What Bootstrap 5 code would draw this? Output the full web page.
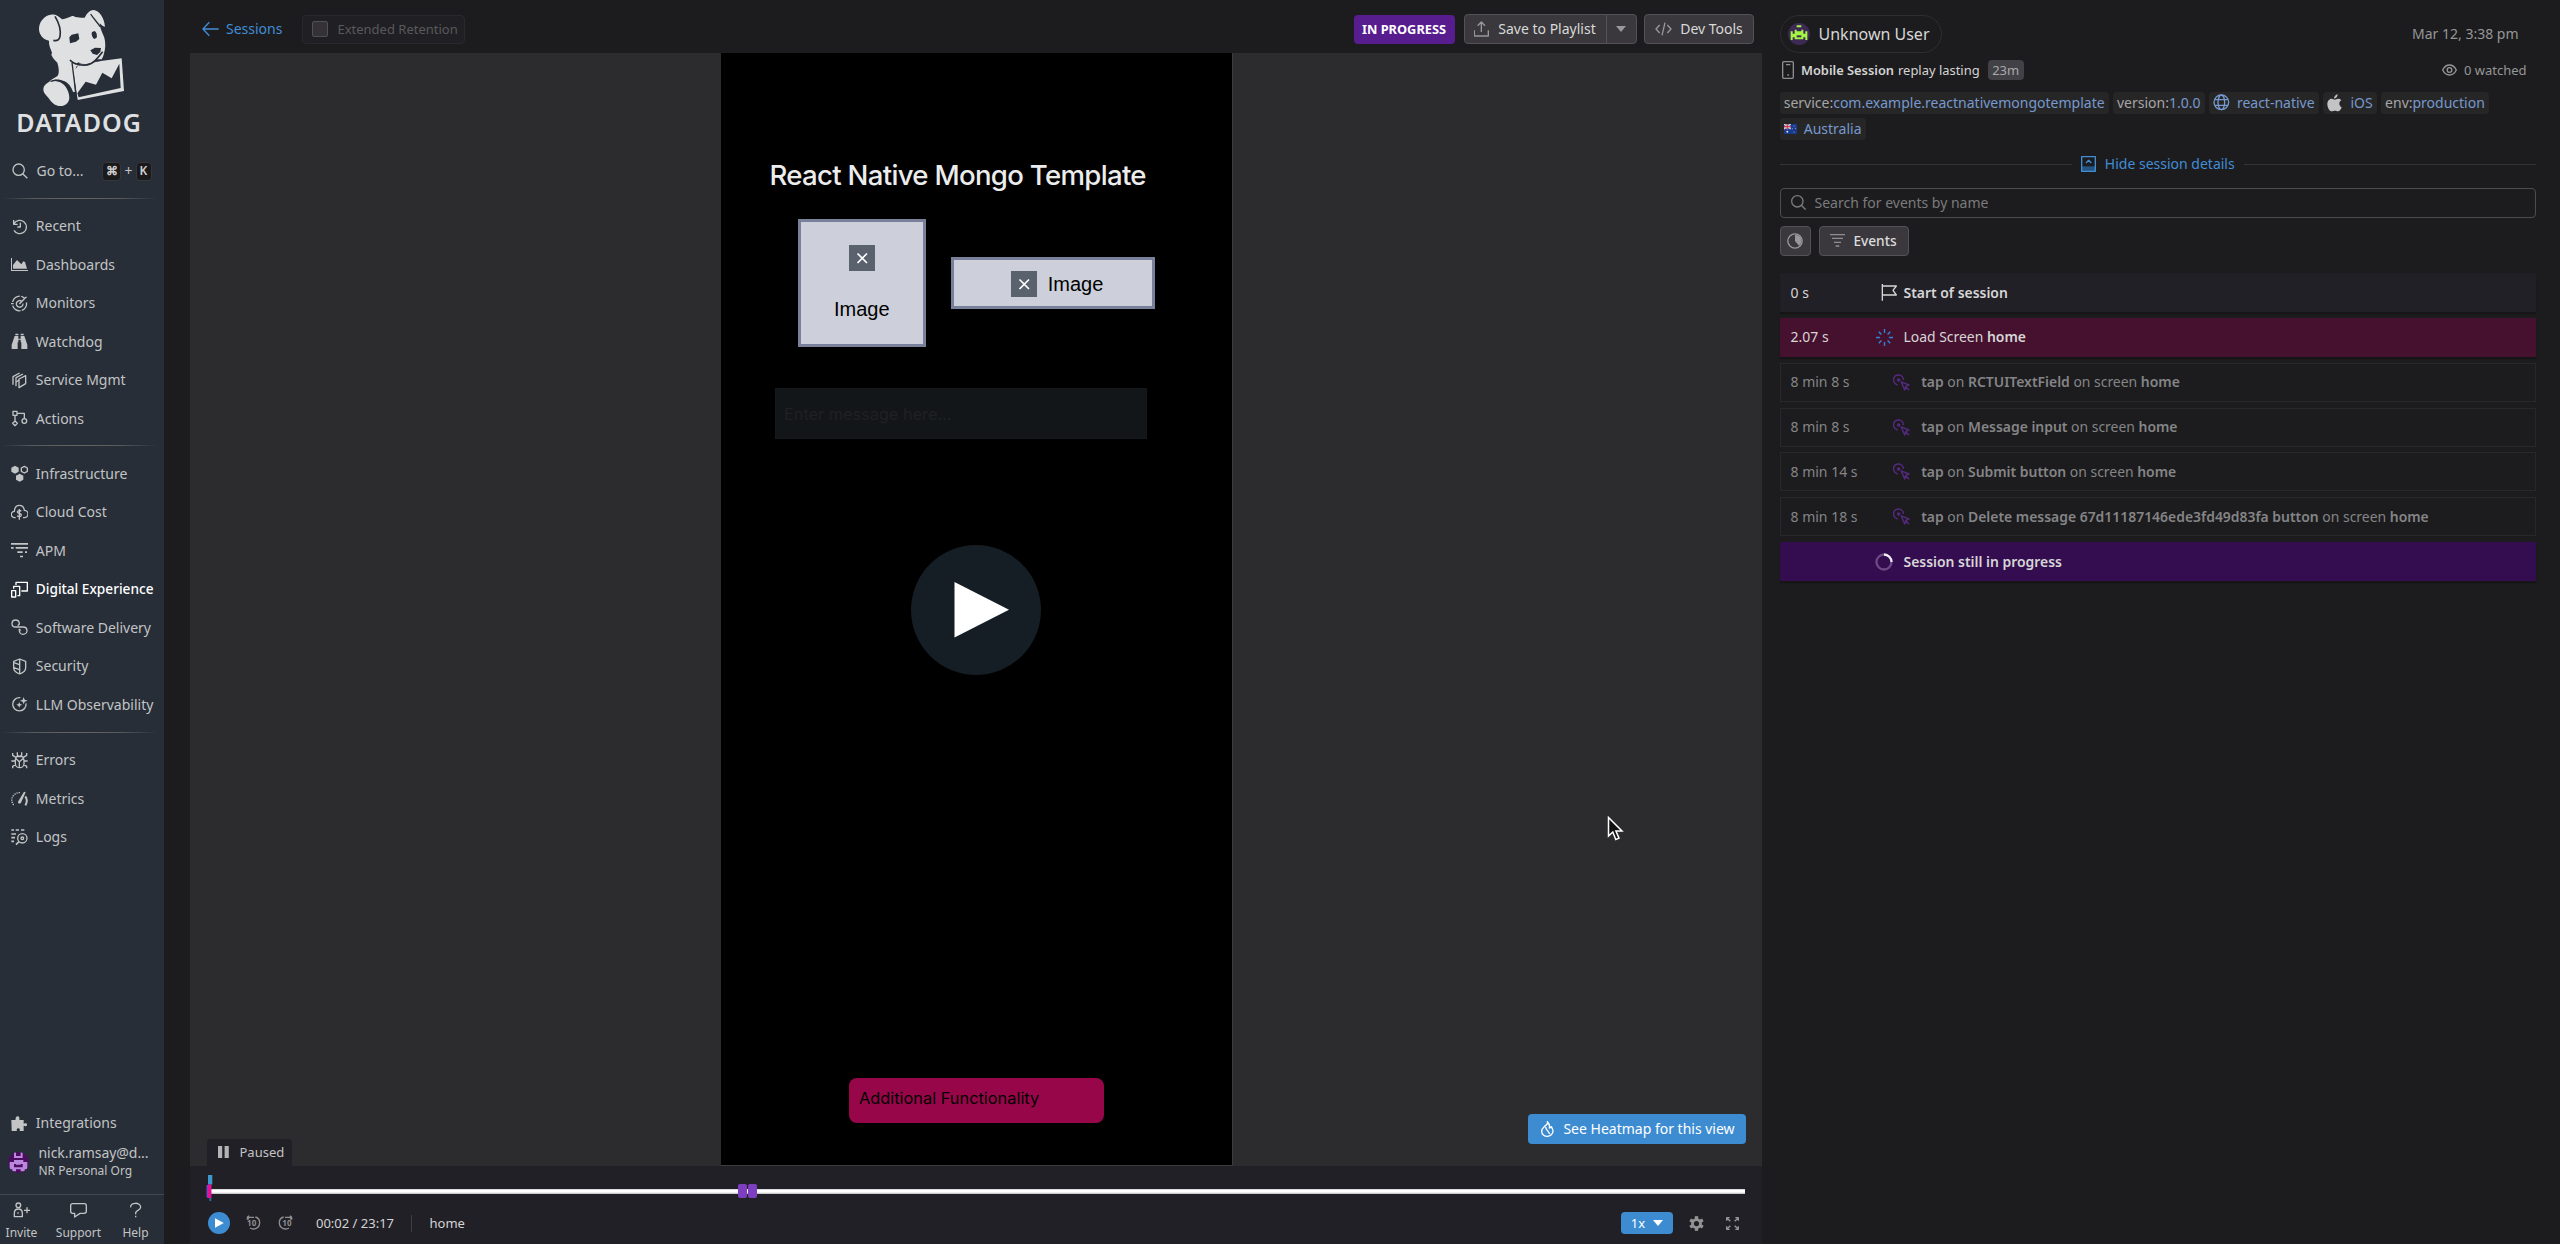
<!DOCTYPE html>
<html lang="en" data-bs-theme="dark">
<head>
<meta charset="utf-8">
<meta name="viewport" content="width=device-width, initial-scale=1">
<title>Session Replay | Datadog</title>
<link href="https://cdn.jsdelivr.net/npm/bootstrap@5.3.0/dist/css/bootstrap.min.css" rel="stylesheet">
<style>
body{background:#1c1c1e;font-family:"Noto Sans",sans-serif;font-size:14px;line-height:20px;color:#cdcdcd;height:1244px;overflow:hidden}
svg{display:block;flex:none}
.ln{fill:none;stroke:currentColor;stroke-width:4;stroke-linecap:butt;stroke-linejoin:round}
.fs12{font-size:12px}.fs13{font-size:13px}
b,.semi{font-weight:600}
.side{width:164px;background:#272e38;color:#c2c4c5;flex:none}
.side .nav-link{height:38.5px;padding:0 0 0 10.5px;display:flex;align-items:center;gap:8.3px;color:inherit;white-space:nowrap}
.side .nav-link.active{color:#fff;font-weight:500;font-size:13.65px}
.side .nav-link svg{width:17px;height:17px}
.rule{height:1px;margin:7.6px 6px 8.2px 2px;background:linear-gradient(90deg,transparent,#5a5b5e 20%,#66645f 50%,#5a5b5e 75%,transparent)}
.goto{height:38px;padding:0 12.5px 0 11.5px;gap:9px}
.key{background:#1a1a1d;border:1px solid #37373b;border-radius:4px;height:19px;line-height:16px;font-size:12px;text-align:center;color:#cfcfcf;font-weight:600}
.foot{height:50px;border-top:1px solid #43474f;font-size:12px}
.foot>div{line-height:14px}
.mainc{width:1572px;margin-left:26px;flex:none}
.topbar{height:53px;padding:5px 8px 0 12px}
.ext{height:29px;width:163px;border:1px solid #29282d;border-radius:4px;background:#201f23;color:#59595c;padding-left:9.5px;gap:9.5px;font-size:13px}
.cbx{width:15.5px;height:15.5px;border:1px solid #515055;border-radius:2px;background:#343237}
.blue{color:#418dd6}
.btn-dk{--bs-btn-bg:#3a383d;--bs-btn-border-color:#545257;--bs-btn-color:#d8d8d8;--bs-btn-font-size:14px;--bs-btn-line-height:20px;--bs-btn-padding-y:0;--bs-btn-padding-x:0;--bs-btn-border-radius:4px;display:flex;align-items:center;justify-content:center}
.progress-tag{height:29px;width:101px;border-radius:4px;background:#571c8e;color:#fff;font-weight:700;font-size:12.8px;line-height:28px;text-align:center}
.stage{height:1112.7px;background:#2c2c2e}
.device{width:511.5px;height:1112.7px;margin-left:531px;background:#000;border-right:1px solid #3c3c3e;border-bottom:1px solid #3c3c3e;font-family:Inter,sans-serif}
.title1{color:#ececec;font-size:27.6px;font-weight:500;letter-spacing:-.7px;line-height:36px;padding:103.5px 0 0 48.5px;white-space:nowrap}
.ph{background:#cdd0da;border:3.5px solid #78809a;color:#000;font:20px/24px "Liberation Sans",sans-serif}
.xb{width:26px;height:26px;background:#5a626d}
.msg{width:372px;height:51px;margin:40.5px 0 0 54px;background:#121618;border:1px solid #15191b;color:#202123;font-size:16.3px;line-height:50px;padding-left:8px}
.addf{width:255px;height:45px;margin:639px 0 0 128px;background:#98064a;border-radius:8px;color:#000;font-size:16.35px;line-height:41px;padding-left:10px}
.bigplay{left:721px;top:492px}
.paused{left:17px;bottom:0;width:85px;height:26.5px;background:#212026;border-radius:4px 4px 0 0;padding-left:11px;gap:10.5px;font-size:13px;color:#c4c4c5}
.heat{right:16.5px;bottom:22px;width:217.5px;height:30px;background:#3d8cd2;border-radius:4px;color:#fff;gap:9.5px;border:0;font-size:14px;padding:0 0 0 2px}
.pointer{left:1417px;top:763px}
.ctl{height:78.3px;background:#212026}
.track{height:5px;margin:23.3px 17px 0 18px;background:linear-gradient(#c9c9cd,#fff 30%,#fff 60%,#b9b9bd)}
.mk{border-radius:2px;background:#7d3fbf;width:9.2px;height:14px;top:-5px}
.ctlrow{height:22px;margin:18.5px 23px 0 18px}
.speed{width:52px;height:22px;background:#3d8cd2;border-radius:4px;color:#fff;gap:8px}
.panel{margin-left:17.5px;width:756.5px;flex:none}
.pill{width:162.5px;height:38.5px;border:1px solid #2e2e31;border-radius:20px;margin-top:14.5px;padding-left:7px;gap:9px;font-size:16px;color:#d6d6d6}
.dur{background:#424145;color:#a9a9ab;border-radius:4px;width:36px;height:20px;line-height:20px;text-align:center;font-size:13px}
.tagx{height:22px;background:#272627;border-radius:4px;padding:0 4.2px;line-height:20px;color:#a6a5a6;display:flex;align-items:center;white-space:pre}
.tagx span{color:#7699ce}
.dline{height:1px;background:#333335}
.find{height:30.5px;border:1px solid #4c4c4f;border-radius:4px;padding-left:10px;gap:9px;color:#7b7b7d}
.ev{height:39px;margin-bottom:5.85px;padding-left:10px;color:#858587;background:#1c1c1e;border:1px solid #28282a;display:flex;align-items:center;white-space:pre}
.ev.solid{border-color:transparent;box-shadow:0 2px 1px #151517;color:#d6d6d6}
.ev .t{width:77.5px}
.ev .ic{width:35.5px;display:flex;align-items:center}
.ev .ic.tapi{width:53.2px;padding-left:25px;color:#55297f}
.ev .tx{font-size:13.93px}
</style>
</head>
<body class="d-flex">

<aside class="side d-flex flex-column h-100">
  <svg width="164" height="140" viewBox="0 0 492 420">
    <g fill="#dfe0e2">
      <path d="M152 44c14-3 24 4 34 14 16-2 24-10 34-10l6 3c10 0 20 4 28 2 6-10 12-22 27-23 16 2 32 22 34 50-6 0-12-6-16-10 1 16 7 26 12 38 6 14 6 36 2 48-2 8-4 16-8 22h-12c-14 8-22 14-34 14-10 1-18-2-24-5l-12 8-2 22 4 58-6 1c-4-14-14-28-27-33-10-4-20-6-32-3l-16 10c10-14 26-18 30-24 4-8 3-22-2-38-8-8-14-14-18-24l2-6c-5-14-10-22-9-36-18-4-30-18-30-36 1-22 16-39 35-42z"/>
      <path d="M166 243c24 0 42 26 42 50 0 14-12 25-27 25-14 0-24-8-31-18-6-10-20-18-20-32 0-12 12-25 36-25z"/>
      <path d="M217 194l148-19 7 98-139 27z"/>
    </g>
    <g fill="#272e38">
      <path d="M236 292l-4-12 25-35 31 9 19-36 28 17 23-44 4 73z"/>
      <path d="M227 206c0-4 2-7 5-9l16-4c10 3 26 2 38-9l16-1-68 14z"/>
      <path d="M208 112l7-8 20-4 3 17-10 8-18 5z"/><path d="M276 96l8-3c6 4 8 14 6 20l-7 4c-6-4-10-14-7-21z"/>
      <path d="M271 151l14-8 18 1-2 12-10 9-13-4z"/>
    </g>
    <g fill="none" stroke="#272e38" stroke-width="5">
      <path d="M210 180c12 14 42 20 62 11 12-6 20-15 28-26l8-10"/><path d="M160 121c12 3 18-1 20-12 3-18-4-42-15-60"/><path d="M272 42c8 14 22 26 28 38" stroke-width="4"/><path d="M216 188l14 112" stroke-width="4"/><path d="M152 244c28-10 50 8 58 30" stroke-width="4"/>
    </g>
    <text x="49" y="395" font-family="Noto Sans,sans-serif" font-weight="600" font-size="75" textLength="374" fill="#dfe0e2">DATADOG</text>
  </svg>
  <div class="goto d-flex align-items-center" style="margin-top:12px">
    <svg width="16" height="16" viewBox="0 0 48 48" class="ln"><circle cx="20" cy="20" r="17"/><path d="M32 32l14 14"/></svg>
    <span>Go to...</span>
    <span class="key ms-auto" style="width:19px">⌘</span><span style="margin:0 -6px">+</span><span class="key" style="width:16px">K</span>
  </div>
  <div class="rule"></div>
  <nav class="nav flex-column flex-nowrap">
    <a class="nav-link"><svg viewBox="0 0 51 51" class="ln"><path d="M8 6v13h12M9 17a20 20 0 1 1 0 20"/><path d="M28 14v13h-9"/></svg>Recent</a>
    <a class="nav-link"><svg viewBox="0 0 51 51" fill="currentColor"><path d="M0 6h3v36h48v3H0z"/><path d="M6 38V27l12-15 13 13 6-9 5 2 6 20z"/></svg>Dashboards</a>
    <a class="nav-link"><svg viewBox="0 0 51 51" class="ln"><path d="M5 21A21 21 0 0 1 40 9M5 32a21 21 0 0 0 41-12" stroke-dasharray="30 4"/><path d="M0 26h8M31 18a10 10 0 1 0 5 8M25 27L43 8l4-2"/></svg>Monitors</a>
    <a class="nav-link"><svg viewBox="0 0 51 51" fill="currentColor"><path d="M13 2h9v5h-9zM29 2h9v5h-9zM11 9h11v8h7V9h11l9 26v13H31V28h-2v-8h-7v8h-2v20H2V35z"/></svg>Watchdog</a>
    <a class="nav-link"><svg viewBox="0 0 51 51" class="ln"><path d="M24 21l20-10v24L24 47zM15 43V17L36 6M6 38V14L26 3"/><path d="M16 30l8-6"/></svg>Service Mgmt</a>
    <a class="nav-link"><svg viewBox="0 0 51 51" class="ln"><path d="M6 4h12v12H6zM12 16v17M12 33l-7 7 7 7 7-7zM18 10h22v16"/><circle cx="40" cy="33" r="7"/></svg>Actions</a>
  </nav>
  <div class="rule"></div>
  <nav class="nav flex-column flex-nowrap">
    <a class="nav-link"><svg viewBox="0 0 51 51"><path fill="currentColor" d="M12 2l11 6v12l-11 6-11-6V8zM26 26l11 6v12l-11 6-11-6V32z"/><path class="ln" d="M40 4l9 5v10l-9 5-9-5V9z"/></svg>Infrastructure</a>
    <a class="nav-link"><svg viewBox="0 0 51 51" class="ln"><path d="M14 41h-3a9 9 0 0 1-1-19C11 10 17 4 25 4s14 6 15 15a11 11 0 0 1 0 22h-4"/><path d="M31 22c-4-4-12-3-12 2 0 6 12 3 12 9 0 6-8 6-13 2M25 15v32"/></svg>Cloud Cost</a>
    <a class="nav-link"><svg viewBox="0 0 51 51" fill="currentColor"><path d="M0 3h51v5H0zM0 15h8v5H0zM14 15h37v5H14zM19 28h16v5H19zM42 28h6v5h-6zM27 41h9v5h-9z"/></svg>APM</a>
    <a class="nav-link active"><svg viewBox="0 0 51 51" class="ln"><path d="M2 29h12v19H2zM8 23v-7h18v28h-7M15 12V4h34v26H31"/></svg>Digital Experience</a>
    <a class="nav-link"><svg viewBox="0 0 51 51" class="ln"><path d="M20 20C28 17 26 3 14 3 5 3 3 10 3 14c0 5 4 10 11 10h22c8 0 12 5 12 11 0 5-4 11-12 11-7 0-11-6-11-11h4M23 30l6 4"/></svg>Software Delivery</a>
    <a class="nav-link"><svg viewBox="0 0 51 51" class="ln"><path d="M26 3l18 7v19c0 8-8 15-18 19C16 44 8 37 8 29V10zM26 3v44M9 14l16 6M9 29l16 6"/></svg>Security</a>
    <a class="nav-link"><svg viewBox="0 0 51 51"><path class="ln" d="M28 5a20 20 0 1 0 17 17"/><path fill="currentColor" d="M38 3l3 8 9 3-9 3-3 8-3-8-8-3 8-3zM25 18l2 6 7 2-7 3-2 6-3-6-6-3 6-2z"/></svg>LLM Observability</a>
  </nav>
  <div class="rule"></div>
  <nav class="nav flex-column flex-nowrap">
    <a class="nav-link"><svg viewBox="0 0 51 51" class="ln"><path d="M16 14h19l4 10v11c0 7-6 12-13 12s-13-5-13-12V24zM25 30v17M15 20l10 9 11-9M19 1v9l6 4 7-4V1M5 3v7l11 7M47 3v7l-11 7M1 27h11M39 27h11M5 49v-6l10-6M47 49v-6l-10-6"/></svg>Errors</a>
    <a class="nav-link"><svg viewBox="0 0 51 51"><path class="ln" stroke-dasharray="4 3" d="M8 45C1 36 0 25 7 17s14-10 23-9"/><path class="ln" style="stroke-width:6" d="M43 19c6 9 6 18 0 27"/><path fill="currentColor" d="M39 5l5 2-14 31c-3 5-10 3-9-3z"/></svg>Metrics</a>
    <a class="nav-link"><svg viewBox="0 0 51 51" class="ln"><path d="M1 3h8M14 3h10M30 3h10M1 15h14M1 26h11M1 37h8M15 47l9-9" style="stroke-width:5"/><circle cx="34" cy="28" r="14"/><circle cx="34" cy="28" r="4"/></svg>Logs</a>
  </nav>
  <div class="mt-auto">
    <a class="nav-link"><svg viewBox="0 0 51 51" fill="currentColor"><path d="M1 15h13c-1-3 0-11 6-11s6 8 5 11h13v11c4 0 3-1 6-1 5 0 6 8 0 9-3 0-3-2-6-2v16H26c1-3 1-8-4-8s-6 5-4 8H2z"/></svg>Integrations</a>
    <div class="d-flex align-items-center" style="padding:0 0 15.5px 8px;gap:9.5px">
      <svg width="21" height="21" viewBox="0 0 63 63" class="mt-1"><defs><clipPath id="av1"><circle cx="31.5" cy="31.5" r="31.5"/></clipPath></defs><g clip-path="url(#av1)"><path fill="#4c0d5f" d="M0 0h63v63H0z"/><path fill="#b987dd" d="M18 0h6v12h14V0h6v18H18zM18 24h28v6h12v22h-8v6H38v-6H24v6H13v-6H5V30h13z"/><path fill="#4c0d5f" d="M18 36h26v10H18z"/><path fill="#b987dd" d="M24 30h14v8H24z"/></g></svg>
      <div><div style="line-height:19px;letter-spacing:-.05px">nick.ramsay@d...</div><div class="fs12" style="line-height:17px">NR Personal Org</div></div>
    </div>
    <div class="foot d-flex text-center">
      <div style="width:43px;padding-top:7px"><svg width="17" height="17" viewBox="0 0 51 51" class="ln mx-auto"><circle cx="16" cy="10" r="7"/><path d="M16 21c-8 0-12 5-12 13v10h24V34c0-8-4-13-12-13zM15 31v4M42 16v18M33 25h18"/></svg><div style="margin-top:7px">Invite</div></div>
      <div style="width:71px;padding-top:7px"><svg width="17" height="17" viewBox="0 0 51 51" class="ln mx-auto"><path d="M8 5h35c4 0 6 2 6 6v17c0 4-3 6-7 6H30L14 45V34H8c-4 0-6-2-6-6V11c0-4 2-6 6-6z"/></svg><div style="margin-top:7px">Support</div></div>
      <div style="width:43px;padding-top:7px"><svg width="17" height="17" viewBox="0 0 51 51" class="ln mx-auto"><path d="M11 16C9 0 41 0 41 15c0 10-15 10-15 18v4M26 41v5"/></svg><div style="margin-top:7px">Help</div></div>
    </div>
  </div>
</aside>

<main class="mainc">
  <header class="topbar d-flex align-items-center">
    <svg width="17" height="16" viewBox="0 0 51 48" class="ln blue"><path d="M50 24H4M22 4L3 24l19 20"/></svg>
    <a class="blue text-decoration-none" style="margin-left:7px">Sessions</a>
    <div class="ext d-flex align-items-center" style="margin-left:19.5px"><span class="cbx"></span>Extended Retention</div>
    <span class="progress-tag ms-auto">IN PROGRESS</span>
    <div class="btn-group" style="margin-left:9px">
      <button class="btn btn-dk" style="width:143px;height:29.5px;gap:9px"><svg width="15" height="16" viewBox="0 0 45 48" class="ln" color="#98979a"><path d="M1 28v17h42V28M22 33V3M11 14L22 3l11 11"/></svg>Save to Playlist</button>
      <button class="btn btn-dk" style="width:31px;height:29.5px"><svg width="10" height="6" viewBox="0 0 10 6"><path fill="#98979a" d="M0 0h10L5 6z"/></svg></button>
    </div>
    <button class="btn btn-dk" style="width:110px;height:29.5px;gap:8px;margin-left:7.5px"><svg width="17" height="14" viewBox="0 0 51 42" class="ln" color="#98979a"><path d="M14 9L3 21l11 12M37 9l11 12-11 12M30 2l-9 38"/></svg>Dev Tools</button>
  </header>

  <section class="stage position-relative">
    <div class="device">
      <div class="title1">React Native Mongo Template</div>
      <div class="d-flex align-items-center" style="margin:26.5px 0 0 76.5px;gap:25px">
        <div class="ph d-flex flex-column align-items-center" style="width:128.5px;height:128px;padding-top:23px"><div class="xb"><svg width="26" height="26" viewBox="0 0 26 26"><path d="M8.5 8.5l9.5 9.5M18 8.5l-9.5 9.5" stroke="#fff" stroke-width="1.7"/></svg></div><div style="margin-top:25.5px">Image</div></div>
        <div class="ph d-flex align-items-center justify-content-center" style="width:204px;height:52px;gap:11px;padding:1px 0 0 8px"><div class="xb"><svg width="26" height="26" viewBox="0 0 26 26"><path d="M8.5 8.5l9.5 9.5M18 8.5l-9.5 9.5" stroke="#fff" stroke-width="1.7"/></svg></div>Image</div>
      </div>
      <div class="msg">Enter message here...</div>
      <div class="addf">Additional Functionality</div>
    </div>
    <svg class="bigplay position-absolute" width="130" height="130" viewBox="0 0 130 130"><circle cx="65" cy="65" r="65" fill="#151e24"/><path fill="#fff" d="M43.500 37l54.500 27.700-54.500 27.700z"/></svg>
    <svg class="pointer position-absolute" width="17" height="25" viewBox="0 0 17 25"><path d="M1.500 1.500v18.500l4.300-4 3 7.500 3.200-1.300-3.100-7.200h6.100z" fill="#111" stroke="#fff" stroke-width="1.500"/></svg>
    <div class="paused position-absolute d-flex align-items-center"><svg width="11" height="12" viewBox="0 0 11 12"><path fill="#b4b4b6" d="M0 0h4.200v12H0zM6.600 0h4.200v12H6.600z"/></svg>Paused</div>
    <button class="heat btn position-absolute d-flex align-items-center justify-content-center"><svg width="13" height="16" viewBox="0 0 39 48" class="ln"><path d="M19 2c4 7-4 10-10 16C3 23 2 27 2 31c0 9 8 15 17 15s17-7 17-15c0-7-3-10-5-14-3 4-4 4-6 4 2-7 0-13-6-19zM15 18c-3 8 8 11 11 21"/></svg>See Heatmap for this view</button>
  </section>

  <footer class="ctl d-flex flex-column">
    <div class="track position-relative">
      <span class="mk position-absolute" style="left:530px"></span><span class="mk position-absolute" style="left:539.7px"></span>
      <svg class="position-absolute" style="left:-2px;top:-14px" width="7" height="27" viewBox="0 0 7 27"><path fill="#3d98cc" d="M2 0h4.300v9.500H2z"/><path fill="#2d6b92" d="M3.300 9h2v17h-2z"/><path fill="#7d3fbf" d="M.5 10.500L2.300 9.500v14L.500 22z"/><path fill="#ee0c96" d="M2 9.500h3.300v13.500H2z"/></svg>
    </div>
    <div class="ctlrow d-flex align-items-center">
      <svg width="22" height="22" viewBox="0 0 22 22"><circle cx="11" cy="11" r="11" fill="#3d8cd2"/><path fill="#fff" d="M7 6.300l8.800 4.700L7 15.700z"/></svg>
      <svg width="15" height="16" viewBox="0 0 45 48" style="margin-left:15.5px" color="#8f8f92"><g class="ln"><path d="M28 6c8 2 13 8 13 17 0 11-8 19-19 19-4 0-7-1-10-3M4 7h20M9 2L4 7l5 6M4 9v5"/></g><text x="3" y="32" font-size="24" font-weight="700" font-family="Noto Sans" textLength="28" fill="currentColor">10</text></svg>
      <svg width="15" height="16" viewBox="0 0 45 48" style="margin-left:17.5px" color="#8f8f92"><g class="ln"><path d="M17 6C9 8 4 14 4 23c0 11 8 19 19 19 4 0 7-1 10-3M41 7H21M36 2l5 5-5 6M41 9v5"/></g><text x="13" y="32" font-size="24" font-weight="700" font-family="Noto Sans" textLength="28" fill="currentColor">10</text></svg>
      <span class="fs13" style="margin-left:23px;width:94.5px;color:#d4d4d6">00:02 / 23:17</span>
      <span style="width:1.5px;height:17px;background:#3f3f44"></span>
      <span class="fs13" style="margin-left:17.5px;color:#d4d4d6">home</span>
      <span class="speed fs13 d-flex align-items-center justify-content-center ms-auto">1x<svg width="10" height="6" viewBox="0 0 10 6"><path fill="#fff" d="M0 0h10L5 6z"/></svg></span>
      <svg width="15" height="15" viewBox="-8 -8 16 16" style="margin-left:15.5px"><g fill="#949496"><circle r="5.700"/><path d="M-1.800-7.800h3.600v15.600h-3.600z"/><path d="M-1.800-7.800h3.600v15.600h-3.600z" transform="rotate(60)"/><path d="M-1.800-7.800h3.600v15.600h-3.600z" transform="rotate(120)"/></g><circle r="2.800" fill="#212026"/></svg>
      <svg width="13" height="13" viewBox="0 0 39 39" class="ln" style="margin-left:22.5px" color="#949496"><path d="M2 11V2h9M2 2l11 11M28 2h9v9M37 2L26 13M2 28v9h9M2 37l11-11M37 28v9h-9M37 37L26 26"/></svg>
    </div>
  </footer>
</main>

<section class="panel">
  <div class="d-flex justify-content-between">
    <div class="pill d-flex align-items-center"><svg width="22" height="22" viewBox="0 0 66 66"><circle cx="33" cy="33" r="33" fill="#3c2a54"/><path fill="#a6f545" d="M26 7h14v6H26zM20 20h6v5h14v-5h6v12h6v-7h6v26h-6v-8h-6v6H20v-6h-6v8H8V25h6v7h6z"/><path fill="#3c2a54" d="M26 37h14v6H26z"/></svg>Unknown User</div>
    <span style="margin:24px 17.5px 0 0;color:#969698">Mar 12, 3:38 pm</span>
  </div>
  <div class="d-flex align-items-center fs13" style="height:20px;margin-top:7px;padding:0 9.5px 0 2.5px;color:#d4d4d4">
    <svg width="12" height="18" viewBox="0 0 36 54" class="ln" color="#8e8e90"><rect x="2" y="2" width="32" height="50" rx="3"/><path d="M12 11h13M16 42h5"/></svg>
    <b style="margin-left:7px;font-size:12.85px">Mobile Session</b><span style="margin-left:4px;font-size:12.95px">replay lasting</span><span class="dur" style="margin-left:8px">23m</span>
    <span class="ms-auto d-flex align-items-center" style="gap:6.5px;color:#969698"><svg width="15" height="12" viewBox="0 0 45 36" class="ln"><path d="M2 18C12-2 33-2 43 18 33 38 12 38 2 18z"/><circle cx="22.5" cy="18" r="7"/></svg>0 watched</span>
  </div>
  <div class="d-flex flex-wrap" style="margin-top:11.5px;gap:4px;row-gap:4.5px">
    <div class="tagx">service:<span>com.example.reactnativemongotemplate</span></div>
    <div class="tagx">version:<span>1.0.0</span></div>
    <div class="tagx" style="gap:7px"><svg width="17" height="17" viewBox="0 0 51 51" class="ln" color="#7699ce"><circle cx="25" cy="25" r="22"/><ellipse cx="25" cy="25" rx="10" ry="22"/><path d="M5 17h40M5 34h40"/></svg><span>react-native</span></div>
    <div class="tagx" style="gap:8.5px"><svg width="15" height="18" viewBox="0 0 45 54"><path fill="#c3c3c5" d="M32 1c0 7-4 12-11 13 0-7 5-12 11-13zM23 17c3 0 6-3 11-3 4 0 7 2 9 5-9 5-7 17 1 21-2 6-6 12-11 12-4 0-5-2-9-2s-6 2-9 2C7 52 1 40 1 30c0-9 6-16 13-16 4 0 6 3 9 3z"/></svg><span>iOS</span></div>
    <div class="tagx">env:<span>production</span></div>
    <div class="tagx" style="gap:7px"><svg width="13" height="10" viewBox="0 0 39 30"><path fill="#173a8c" d="M0 0h39v30H0z"/><path stroke="#ddd" stroke-width="4" d="M0 0l20 15M20 0L0 15"/><path stroke="#ddd" stroke-width="6" d="M10 0v16M0 8h20"/><path stroke="#d3344c" stroke-width="3.5" d="M10 0v16M0 8h20"/><circle cx="10" cy="23" r="3" fill="#ddd"/><g fill="#b9c5e8"><circle cx="30" cy="6" r="1.5"/><circle cx="25" cy="14" r="1.5"/><circle cx="35" cy="13" r="1.5"/><circle cx="30" cy="24" r="1.5"/></g></svg><span>Australia</span></div>
  </div>
  <div class="d-flex align-items-center" style="margin-top:14px;height:20px">
    <div class="dline flex-grow-1"></div>
    <svg width="15" height="16" viewBox="0 0 45 48" class="ln blue" style="margin:0 9px"><path fill="#255583" stroke="none" d="M2 31h41v14H2z"/><path d="M2 2h41v44H2zM15 21l8-8 8 8"/></svg>
    <span class="blue">Hide session details</span>
    <div class="dline flex-grow-1" style="margin-left:9px"></div>
  </div>
  <div class="find d-flex align-items-center" style="margin-top:13.5px"><svg width="15" height="15" viewBox="0 0 45 45" class="ln"><circle cx="19" cy="19" r="17"/><path d="M31 31l13 13"/></svg>Search for events by name</div>
  <div class="d-flex" style="margin-top:7.5px;gap:8px">
    <button class="btn btn-dk" style="width:31px;height:30.5px"><svg width="16" height="16" viewBox="0 0 48 48" color="#98979a"><circle cx="24" cy="24" r="21.5" class="ln"/><path fill="currentColor" d="M24 5v19l12 14c12-10 10-32-12-33z"/></svg></button>
    <button class="btn btn-dk" style="width:90px;height:30.5px;gap:8px;font-size:13.7px;font-weight:500;color:#dcdcdc"><svg width="15" height="13" viewBox="0 0 45 39" class="ln" color="#8f8e91"><path d="M0 2h45M6 13h33M12 25h21M17 36h11"/></svg>Events</button>
  </div>
  <div style="margin-top:17px">
    <div class="ev solid" style="background:#212026"><span class="t">0 s</span><span class="ic" style="padding-left:13px"><svg width="17" height="17" viewBox="0 0 51 51" class="ln"><path d="M4 0v50M4 6h42L36 19l10 14H4"/></svg></span><b class="tx">Start of session</b></div>
    <div class="ev solid" style="background:#46112e"><span class="t">2.07 s</span><span class="ic" style="padding-left:8px"><svg width="17" height="17" viewBox="-25 -25 50 50" class="ln" color="#3185d4"><path d="M0-25v12M0 13v12M-25 0h12M13 0h12M-17-17l8 8M17-17l-8 8M-17 17l8-8M17 17l-8-8"/></svg></span><span class="tx">Load Screen <b>home</b></span></div>
    <div class="ev"><span class="t">8 min 8 s</span><span class="ic tapi"><svg width="17" height="17" viewBox="0 0 48 48" class="ln"><path d="M13 31C-5 24 0 3 16 3c9 0 14 7 13 14M23 22l22 9-9 4-3 10zM36 36l9 10"/><circle cx="16" cy="17" r="3" fill="currentColor"/></svg></span><span class="tx"><b>tap</b> on <b>RCTUITextField</b> on screen <b>home</b></span></div>
    <div class="ev"><span class="t">8 min 8 s</span><span class="ic tapi"><svg width="17" height="17" viewBox="0 0 48 48" class="ln"><path d="M13 31C-5 24 0 3 16 3c9 0 14 7 13 14M23 22l22 9-9 4-3 10zM36 36l9 10"/><circle cx="16" cy="17" r="3" fill="currentColor"/></svg></span><span class="tx"><b>tap</b> on <b>Message input</b> on screen <b>home</b></span></div>
    <div class="ev"><span class="t">8 min 14 s</span><span class="ic tapi"><svg width="17" height="17" viewBox="0 0 48 48" class="ln"><path d="M13 31C-5 24 0 3 16 3c9 0 14 7 13 14M23 22l22 9-9 4-3 10zM36 36l9 10"/><circle cx="16" cy="17" r="3" fill="currentColor"/></svg></span><span class="tx"><b>tap</b> on <b>Submit button</b> on screen <b>home</b></span></div>
    <div class="ev"><span class="t">8 min 18 s</span><span class="ic tapi"><svg width="17" height="17" viewBox="0 0 48 48" class="ln"><path d="M13 31C-5 24 0 3 16 3c9 0 14 7 13 14M23 22l22 9-9 4-3 10zM36 36l9 10"/><circle cx="16" cy="17" r="3" fill="currentColor"/></svg></span><span class="tx"><b>tap</b> on <b>Delete message 67d11187146ede3fd49d83fa button</b> on screen <b>home</b></span></div>
    <div class="ev solid" style="background:#340d50"><span class="t"></span><span class="ic" style="padding-left:7px"><svg width="18" height="18" viewBox="0 0 18 18" fill="none" stroke-width="2.3"><circle cx="9" cy="9" r="7.500" stroke="#6d4a86"/><path d="M9 1.500A7.500 7.500 0 0 1 16.500 9" stroke="#eee"/></svg></span><b class="tx">Session still in progress</b></div>
  </div>
</section>

<script src="https://cdn.jsdelivr.net/npm/bootstrap@5.3.0/dist/js/bootstrap.bundle.min.js"></script>
</body>
</html>
